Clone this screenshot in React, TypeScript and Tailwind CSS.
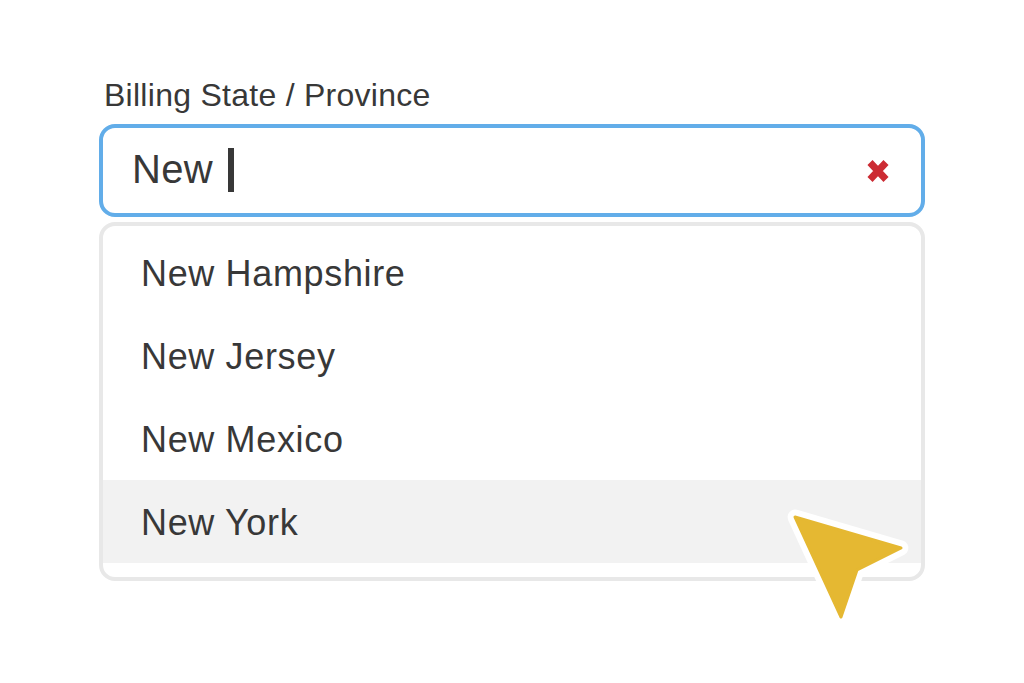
import React from 'react';

const STATES = ['New Hampshire', 'New Jersey', 'New Mexico', 'New York'];

export default function App() {
  return (
    <div className="h-[683px] w-[1024px] overflow-hidden bg-white font-['Liberation_Sans',Arial,sans-serif] text-[#383838]">
      <div className="relative mx-auto w-[826px] pt-[76px]">
        <label className="block h-[48px] pl-[5px] text-[32px] leading-[38px] tracking-[0.27px]">Billing State / Province</label>

        <div className="flex h-[93px] items-center justify-between rounded-[16px] border-4 border-[#62ade9] pl-[29px] pr-[32px]">
          <div className="flex items-center">
            <span className="-mt-[4px] text-[40px] leading-none tracking-[0.3px]">New</span>
            <span className="ml-[15px] -mt-[1px] h-[44px] w-[6px] bg-[#383838]" />
          </div>
          <svg className="h-[24px] w-[22px]" viewBox="0 0 22 24" aria-hidden>
            <path d="M3 3.5 L19 20.5 M19 3.5 L3 20.5" stroke="#cc2b33" strokeWidth="7" fill="none" />
          </svg>
        </div>

        <ul className="mt-[5px] rounded-[16px] border-4 border-[#e8e8e8] pb-[14px] pt-[5px]">
          {STATES.map((state) => (
            <li
              key={state}
              className={`flex h-[83px] items-center pl-[38px] text-[36px] leading-none tracking-[0.65px] ${state === 'New York' ? 'bg-[#f2f2f2]' : ''}`}
            >
              <span className="mt-[2px]">{state}</span>
            </li>
          ))}
        </ul>

        {/* viewBox uses page coordinates, so the points read straight off the screenshot */}
        <svg className="absolute left-[681px] top-[500px] h-[130px] w-[135px]" viewBox="780 500 135 130" aria-hidden>
          <path
            d="M795 517 L901 548 L857 570 L841 617 Z"
            fill="#ffffff"
            stroke="#ffffff"
            strokeWidth="15"
            strokeLinejoin="round"
          />
          <path
            d="M795 517 L901 548 L857 570 L841 617 Z"
            fill="#e5b832"
            stroke="#e5b832"
            strokeWidth="3"
            strokeLinejoin="round"
          />
        </svg>
      </div>
    </div>
  );
}
